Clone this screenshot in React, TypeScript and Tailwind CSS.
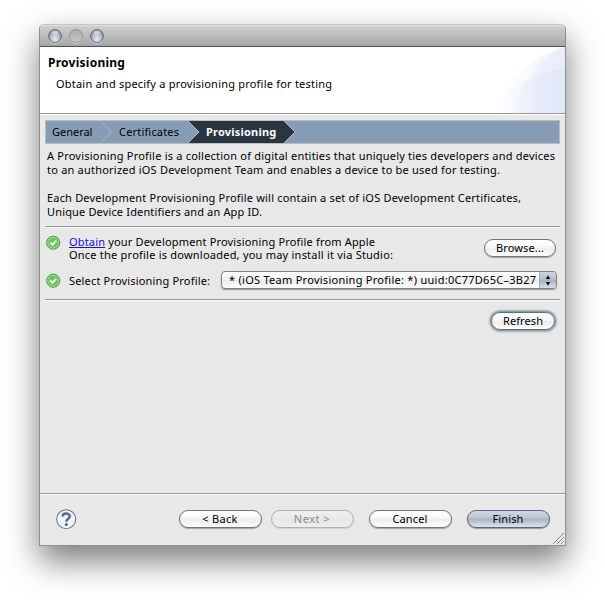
import type { ReactNode } from "react";

function TrafficLight({ dim = false }: { dim?: boolean }) {
  return (
    <span
      className={
        dim
          ? "size-[14px] rounded-full border border-[#959595] bg-linear-to-b from-[#ababab] to-[#c8c8c8] shadow-[0_1px_0_#cfcfcf]"
          : "flex size-[14px] justify-center rounded-full border border-[#6b7482] bg-radial-[at_50%_75%] from-[#e9edf1] via-[#b4bbc5] to-[#626d7e] pt-px shadow-[0_1px_0_#d4d4d4]"
      }
    >
      {!dim && <span className="h-[3px] w-[6px] rounded-full bg-white/40" />}
    </span>
  );
}

function Separator() {
  return <div className="h-[2px] shrink-0 border-t border-[#999999] bg-white" />;
}

function PushButton({ className, children }: { className: string; children: ReactNode }) {
  return (
    <button
      className={`flex h-[18px] shrink-0 items-start justify-center rounded-full border whitespace-nowrap leading-[15px] ${className}`}
    >
      {children}
    </button>
  );
}

const normal =
  "border-[#747474] bg-[linear-gradient(to_bottom,#ffffff_0%,#f7f7f7_45%,#ececec_50%,#fdfdfd_100%)] shadow-[0_1px_1px_rgba(0,0,0,0.3)]";
const disabled =
  "border-[#b0b0b0] bg-[linear-gradient(to_bottom,#efefef_0%,#ebebeb_45%,#e6e6e6_50%,#efefef_100%)] text-[#8c8c8c] shadow-[0_1px_1px_rgba(0,0,0,0.1)]";
const primary =
  "border-[#5b6380] bg-[linear-gradient(to_bottom,#d3d9e3_0%,#bcc5d0_45%,#a8b4c1_50%,#dbe5ee_100%)] shadow-[0_1px_1px_rgba(0,0,0,0.35)]";

function CheckIcon() {
  return (
    <svg className="size-[15px] shrink-0" viewBox="0 0 15 15" fill="none">
      <circle cx="7.2" cy="7.7" r="6.6" fill="#6cc25c" stroke="#479644" strokeWidth="0.9" />
      <circle cx="7.2" cy="7.7" r="5.4" stroke="#a9dc9b" strokeWidth="0.9" />
      <path d="M4.2 7.6 6.5 9.7 10.3 5.8" stroke="white" strokeWidth="1.9" />
    </svg>
  );
}

function Breadcrumbs() {
  return (
    <div className="relative flex h-[24px] shrink-0 items-start border border-[#bcbcbc] bg-[#869cb4] pt-[3px] leading-[15px]">
      <svg className="absolute top-0 left-0 h-[22px] w-[260px]" viewBox="0 0 260 22" fill="none">
        <path d="M54.5 0 65.5 11 54.5 22" stroke="#b4bac0" />
        <path d="M142 0H238L249 11 238 22H142L153 11Z" fill="#293641" />
        <path d="M142 0 153 11 142 22M238 0 249 11 238 22" stroke="#b4bac0" />
      </svg>
      <span className="relative ml-[6px] w-[67px] tracking-[-0.02px]">General</span>
      <span className="relative w-[87px] tracking-[0.18px]">Certificates</span>
      <span className="relative font-bold tracking-[0.2px] text-white">Provisioning</span>
    </div>
  );
}

export default function App() {
  return (
    <div className="h-[600px] w-[605px] overflow-hidden bg-white pt-[24px] pl-[39px] font-['Noto_Sans',sans-serif] text-[11px] text-black">
      <div className="flex h-[522px] w-[527px] flex-col rounded-t-[5px] border border-[#8f8f8f] border-t-[#c4c4c4] bg-[#e8e8e8] shadow-[0_15px_33px_rgba(0,0,0,0.52)]">
        <div className="flex h-[22px] shrink-0 items-center gap-[7px] rounded-t-[4px] border-t border-b border-t-[#dedede] border-b-[#505050] bg-linear-to-b from-[#cfcfcf] to-[#a6a6a6] pl-[8px]">
          <TrafficLight />
          <TrafficLight dim />
          <TrafficLight />
        </div>

        <div className="relative h-[66px] shrink-0 bg-white pt-[7px] pl-[8px]">
          <svg className="absolute top-0 right-0 h-[66px] w-[75px]" viewBox="0 0 75 66">
            <defs>
              <linearGradient id="swoosh" x1="0" x2="75" y1="0" y2="0" gradientUnits="userSpaceOnUse">
                <stop offset="0.05" stopColor="#c3d0f0" stopOpacity="0" />
                <stop offset="0.7" stopColor="#c3d0f0" stopOpacity="0.17" />
                <stop offset="1" stopColor="#c3d0f0" stopOpacity="0.22" />
              </linearGradient>
            </defs>
            <path d="M0 66C18 34 42 7 75 0V66Z" fill="url(#swoosh)" />
            <path d="M24 66C30 40 47 10 75 0V66Z" fill="url(#swoosh)" />
            <path d="M0 66C18 42 44 25 75 21V66Z" fill="url(#swoosh)" />
          </svg>
          <h1 className="text-[12px] leading-[17px] font-bold tracking-[0.25px]">Provisioning</h1>
          <p className="mt-[5px] ml-[8px] leading-[15px] tracking-[0.213px]">
            Obtain and specify a provisioning profile for testing
          </p>
        </div>
        <Separator />

        <div className="flex grow flex-col px-[5px] pt-[5px]">
          <Breadcrumbs />
          <div className="h-[82px] shrink-0 pt-[5px] pl-[2px] leading-[14px] whitespace-nowrap">
            <p className="tracking-[0.214px]">
              A Provisioning Profile is a collection of digital entities that uniquely ties developers and devices
            </p>
            <p className="tracking-[0.216px]">
              to an authorized iOS Development Team and enables a device to be used for testing.
            </p>
            <p className="mt-[14px] tracking-[0.185px]">
              Each Development Provisioning Profile will contain a set of iOS Development Certificates,
            </p>
            <p className="tracking-[0.154px]">Unique Device Identifiers and an App ID.</p>
          </div>
          <Separator />

          <div className="flex h-[43px] shrink-0 items-start pt-[7px] pr-[4px] pl-px">
            <CheckIcon />
            <div className="ml-[8px] leading-[13px] whitespace-nowrap">
              <p className="tracking-[0.167px]">
                <a className="text-[#1010f0] underline">Obtain</a> your Development Provisioning Profile from Apple
              </p>
              <p className="tracking-[0.226px]">Once the profile is downloaded, you may install it via Studio:</p>
            </div>
            <PushButton className={`mt-[4px] ml-auto w-[72px] tracking-[0.14px] ${normal}`}>Browse...</PushButton>
          </div>

          <div className="flex h-[28px] shrink-0 items-start pr-[3px] pl-px">
            <span className="mt-[2px] flex">
              <CheckIcon />
            </span>
            <span className="mt-[2px] ml-[8px] w-[152px] leading-[15px] tracking-[0.174px] whitespace-nowrap">
              Select Provisioning Profile:
            </span>
            <div className="flex h-[18px] grow overflow-hidden rounded-[4px] border border-[#808080] bg-[linear-gradient(to_bottom,#ffffff_0%,#f5f5f5_45%,#ebebeb_50%,#fdfdfd_100%)] shadow-[0_1px_1px_rgba(0,0,0,0.35)]">
              <span className="w-[317px] shrink-0 pl-[7px] leading-[15px] tracking-[0.27px] whitespace-nowrap">
                * (iOS Team Provisioning Profile: *) uuid:0C77D65C–3B27
              </span>
              <span className="flex grow items-center justify-center border-l border-[#a4adb9] bg-[linear-gradient(to_bottom,#ccd4df_0%,#b6c0cd_45%,#a2afbe_50%,#d6e1eb_100%)]">
                <svg className="h-[11px] w-[6px]" viewBox="0 0 6 11" fill="#111111">
                  <path d="M3 0.3 5.3 4H0.7ZM3 10.7 0.7 7H5.3Z" />
                </svg>
              </span>
            </div>
          </div>
          <Separator />

          <div className="flex justify-end pt-[11px] pr-[5px]">
            <PushButton className="w-[64px] border-[#63707c] bg-[linear-gradient(to_bottom,#ffffff_0%,#f7f7f7_45%,#ececec_50%,#fdfdfd_100%)] tracking-[0.1px] shadow-[0_0_2px_1.5px_#7d8c9a]">
              Refresh
            </PushButton>
          </div>
        </div>

        <Separator />
        <div className="relative flex h-[50px] shrink-0 items-start pt-[15px] pl-[16px]">
          <svg className="-mt-px size-[21px] shrink-0" viewBox="0 0 21 21" fill="none">
            <circle cx="10.2" cy="10.2" r="9.5" fill="#f1f4f7" stroke="#6375a0" strokeWidth="1.1" />
            <path
              d="M6.6 7.4C6.6 3.7 13.8 3.6 13.8 7.3 13.8 9.8 10.3 9.7 10.3 12.8"
              stroke="#566a94"
              strokeWidth="2.5"
            />
            <circle cx="10.3" cy="15.5" r="1.6" fill="#566a94" />
          </svg>
          <PushButton className={`ml-[101.5px] w-[83px] tracking-[0.28px] ${normal}`}>&lt; Back</PushButton>
          <PushButton className={`ml-[9px] w-[83px] tracking-[0.5px] ${disabled}`}>Next &gt;</PushButton>
          <PushButton className={`ml-[15px] w-[83px] tracking-[0.15px] ${normal}`}>Cancel</PushButton>
          <PushButton className={`ml-[15px] w-[83px] tracking-[0.15px] ${primary}`}>Finish</PushButton>
          <svg className="absolute right-px bottom-px size-[11px]" viewBox="0 0 11 11" fill="none">
            <path d="M0 11 11 0M4 11 11 4M8 11 11 8" stroke="#808080" />
            <path d="M1.2 11 11 1.2M5.2 11 11 5.2M9.2 11 11 9.2" stroke="#ffffff" strokeWidth="0.6" />
          </svg>
        </div>
      </div>
    </div>
  );
}
